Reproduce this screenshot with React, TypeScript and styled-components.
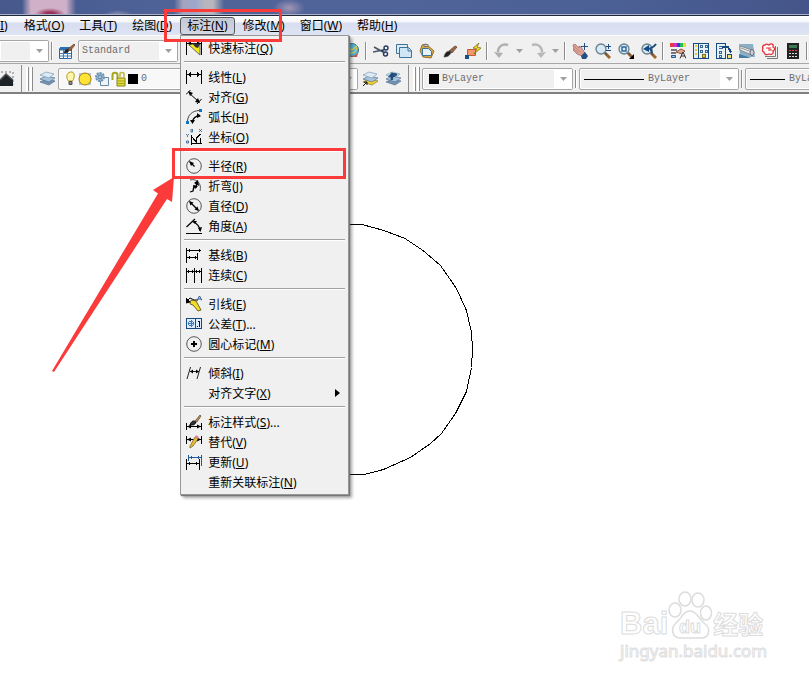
import React from "react";
import styled, { createGlobalStyle } from "styled-components";

const GlobalStyle = createGlobalStyle`
  * { box-sizing: border-box; }
  html, body, #root { height: 100%; }
  body {
    margin: 0;
    overflow: hidden;
    background: #fff;
    color: #000;
    font: 12px/18px "Noto Sans", "Noto Sans CJK SC", sans-serif;
  }
  button, select { font: inherit; color: inherit; }
`;

const Window = styled.div`
  position: relative;
  display: flex;
  flex-direction: column;
  min-height: 100vh;
`;

const TitleStrip = styled.header`
  height: 16px;
  flex: none;
  border-bottom: 1px solid #20283c;
  box-shadow: inset 0 -1px #a9b2c8;
  background:
    radial-gradient(ellipse 15px 6px at 50px 14px, #983058 0 30%, transparent 100%),
    linear-gradient(90deg, transparent 22px, #cfb0c8 31px 66px, transparent 76px),
    radial-gradient(ellipse 14px 5px at 118px 15px, #8c93b4, transparent),
    linear-gradient(90deg, transparent 174px, #a5a3bd 183px, #9ba8cb 195px, #b9b7bd 206px 213px, transparent 224px),
    radial-gradient(ellipse 16px 9px at 289px 8px, #a296b4, transparent),
    linear-gradient(90deg, #46588c, #4f6398 20%, #50649a 50%, #4b6095 75%, #45558a);
`;

const MenuBar = styled.nav`
  display: flex;
  flex: none;
  gap: 1px;
  height: 19px;
  padding-top: 1px;
  background: linear-gradient(#fff 0, #f4f6fb 6px, #d7deef 7px, #dfe4f3 100%);
`;

const MenuSlot = styled.div`
  position: relative;
`;

const MenuTitle = styled.button<{ $open?: boolean; $cut?: boolean }>`
  height: 18px;
  padding: ${(p) => (p.$cut ? "0 7px 0 0" : "0 6px")};
  border: 1px solid ${(p) => (p.$open ? "#55585f" : "transparent")};
  border-left-width: ${(p) => (p.$cut ? "0" : "1px")};
  border-radius: 3px;
  background: ${(p) => (p.$open ? "linear-gradient(#c3c8d3, #d3d8e4)" : "none")};
  line-height: 16px;
  white-space: nowrap;
`;

const Popup = styled.div`
  position: absolute;
  z-index: 2;
  top: 18px;
  left: 0;
  width: 169px;
  padding: 2px 0;
  border: 1px solid #979797;
  background: #f0f0f0;
  box-shadow: 1px 1px 1px #777, 3px 3px 3px rgba(0, 0, 0, 0.35);
`;

const PopupItem = styled.button`
  display: flex;
  align-items: center;
  width: 100%;
  height: 20px;
  padding: 0 8px 0 5px;
  gap: 6px;
  border: 0;
  background: none;
  line-height: 18px;
  text-align: left;
  white-space: nowrap;
`;

const ItemLabel = styled.span`
  flex: 1;
  padding-top: 2px;
`;

const PopupRule = styled.hr`
  height: 2px;
  margin: 3px 3px 4px;
  border: 0;
  border-top: 1px solid #a0a0a0;
  border-bottom: 1px solid #fff;
`;

const Toolbar = styled.div<{ $last?: boolean }>`
  display: flex;
  flex: none;
  align-items: center;
  height: ${(p) => (p.$last ? "31px" : "28px")};
  padding-top: ${(p) => (p.$last ? "2px" : "3px")};
  overflow: hidden;
  background: #f0f0f0;
  border-top: 1px solid ${(p) => (p.$last ? "#a8a8a8" : "#fbfbfb")};
  border-bottom: ${(p) => (p.$last ? "2px solid #808080" : "0")};
`;

const ToolButton = styled.button<{ $w?: number }>`
  display: flex;
  flex: none;
  align-items: center;
  justify-content: center;
  width: ${(p) => p.$w ?? 23}px;
  height: 22px;
  padding: 0;
  border: 0;
  background: none;
`;

const Divider = styled.span`
  flex: none;
  width: 6px;
  height: 18px;
  background: linear-gradient(90deg, transparent 2px, #8c8c8c 2px 3px, #fff 3px 4px, transparent 4px);
`;

const BandEdge = styled.span<{ $before: number }>`
  flex: none;
  width: 5px;
  height: 28px;
  margin-left: ${(p) => p.$before}px;
  border-left: 1px solid #8c8c8c;
`;

const Grip = styled.span`
  flex: none;
  width: 7px;
  height: 24px;
  margin-right: 2px;
  background: linear-gradient(90deg, #fff 0 2px, #8c8c8c 2px 3px, transparent 3px 4px, #fff 4px 6px, #8c8c8c 6px);
`;

const HiddenRun = styled.span`
  flex: none;
  width: 162px;
`;

const ComboFrame = styled.label<{ $w: number; $pad: number; $light?: boolean; $cut?: boolean }>`
  display: flex;
  flex: none;
  align-items: center;
  gap: 1px;
  width: ${(p) => p.$w}px;
  height: 22px;
  padding-left: ${(p) => p.$pad}px;
  border: 1px solid #a5a5a5;
  border-left-width: ${(p) => (p.$cut ? "0" : "1px")};
  border-radius: ${(p) => (p.$cut ? "0 2px 2px 0" : "2px")};
  box-shadow: inset 0 0 0 1px #fff;
  background: ${(p) => (p.$light ? "#f8f8f8" : "#f0f0f0")};
`;

const ComboSelect = styled.select`
  appearance: none;
  flex: 1;
  min-width: 0;
  padding: 0;
  border: 0;
  background: none;
  color: #6d6d6d;
  font: 10px/18px "Liberation Mono", monospace;
`;

const ComboArrow = styled.span`
  display: grid;
  place-items: center;
  flex: none;
  width: 18px;
  height: 20px;
  background: #fff;
`;

const Swatch = styled.span`
  flex: none;
  width: 10px;
  height: 10px;
  margin-right: 2px;
  background: #000;
`;

const LineSample = styled.span<{ $w: number }>`
  flex: none;
  width: ${(p) => p.$w}px;
  height: 1px;
  margin-right: 3px;
  background: #000;
`;

const Canvas = styled.main`
  position: relative;
  flex: 1;
  background: #fff;
`;

const Drawing = styled.svg`
  position: absolute;
  top: 0;
  left: 0;
`;

const Highlight = styled.div<{ $x: number; $y: number; $w: number; $h: number }>`
  position: absolute;
  z-index: 3;
  pointer-events: none;
  left: ${(p) => p.$x}px;
  top: ${(p) => p.$y}px;
  width: ${(p) => p.$w}px;
  height: ${(p) => p.$h}px;
  border: 3px solid #fb3a3a;
`;

const Watermark = styled.div`
  position: absolute;
  right: 44px;
  bottom: 16px;
  width: 145px;
  white-space: nowrap;
`;

const Brand = styled.div`
  display: flex;
  align-items: flex-end;
  height: 46px;
  color: #fff;
  font: bold 31px/31px "Liberation Sans", sans-serif;
  -webkit-text-stroke: 1px #dcdcdc;
`;

const BrandCn = styled.span`
  font: bold 25px/32px "Noto Sans CJK SC", sans-serif;
`;

const Site = styled.div`
  color: #fff;
  font: 17px/24px "Noto Sans", sans-serif;
  -webkit-text-stroke: 1px #e0e0e0;
`;

type Draw = { children: React.ReactNode; crisp?: boolean };

const Icon = ({ children, crisp }: Draw) => (
  <svg width="16" height="16" viewBox="0 0 16 16" fill="none" stroke="#000" aria-hidden="true"
    shapeRendering={crisp ? "crispEdges" : "auto"}>
    {children}
  </svg>
);

const Chevron = () => (
  <svg width="7" height="4" viewBox="0 0 7 4" aria-hidden="true"><path d="M0 0h7L3.500 4z" fill="#a0a0a0" /></svg>
);

const menuIcons: Record<string, React.ReactNode> = {
  quick: <Icon><path d="M.5 1v14M15.500 1v14M1 3.500h14" /><path d="M1 3.500l4-2v4zM15 3.500l-4-2v4z" fill="#000" stroke="none" /><path d="M3 5l11 10V4l-4 3-3-3z" fill="#f4e81c" stroke="#444" strokeWidth=".8" /><path d="M7 3l7 1-2 4-3-1z" fill="#333" stroke="none" /></Icon>,
  linear: <Icon crisp><path d="M.5 1v14M15.500 1v14M1 5.500h14M3.500 4v3M12.500 4v3M2.500 5v1M4.500 3v5M11.500 3v5" /></Icon>,
  aligned: <Icon><path d="M0 5.500L4.500 1M11 15l4.500-5M3 4l9.500 8.500" /><path d="M2 2l5 2-3 3zM14 14l-5-1 3-4z" fill="#000" stroke="none" /></Icon>,
  arc: <Icon><path d="M1.500 12C2 6 6 2 13 1.500" stroke="#444" /><path d="M6.500 13C7 9 9 7 14 6.500" strokeWidth="1.300" /><path d="M4 11h5l-2.500 4zM11 4v5l4-2z" fill="#000" stroke="none" /><path d="M0 12h3v3H0zM13 0h3v3h-3z" fill="#1672b8" stroke="none" /></Icon>,
  ordinate: <Icon><path d="M5.500 6v9.500M5 14.500h11M6 8l5 6M10.500 14V9l4-4M14 14V9" shapeRendering="crispEdges" /><path d="M5 0h1.500v3H5zM13 0l3 3M16 0l-3 3M0 5l1.500 1.500L3 5M1.500 6.500V8M.5 12h2v2h-2z" stroke="#35689a" strokeWidth=".9" /></Icon>,
  radius: <Icon><circle cx="8" cy="8" r="7.300" stroke="#555" /><path d="M8.500 8.500L4 4" strokeWidth="1.200" /><path d="M3 3l5 2-3 3z" fill="#000" stroke="none" /></Icon>,
  jogged: <Icon><path d="M4 2c7-2 12 4 10 11" stroke="#555" /><path d="M4 14l3-1 1-5 2 1 1-5" strokeWidth="1.300" /><path d="M12 2l1 6-5-3zM7 7l5 1-3 3z" fill="#000" stroke="none" /></Icon>,
  diameter: <Icon><circle cx="8" cy="8" r="7.300" stroke="#555" /><path d="M4 4l8 8" strokeWidth="1.200" /><path d="M3 3l4.500 1.500-3 3zM13 13l-4.500-1.500 3-3z" fill="#000" stroke="none" /></Icon>,
  angular: <Icon><path d="M0 15.500h16" shapeRendering="crispEdges" strokeWidth="1" /><path d="M.5 9L9 1M7 4c4 1 7 5 7 9" strokeWidth="1.200" /><path d="M7 3l4 0-2 3zM12 10l4-1-1.500 5z" fill="#000" stroke="none" /></Icon>,
  baseline: <Icon crisp><path d="M.5 1v15M11.500 6v7M1 3.500h14M1 10.500h10M3.500 2v3M13.500 2v3M3.500 9v3M9.500 9v3" /></Icon>,
  cont: <Icon crisp><path d="M.5 1v15M8.500 1v15M15.500 1v15M1 4.500h14M2.500 3v3M6.500 3v3M10.500 3v3M13.500 3v3" /></Icon>,
  leader: <Icon><path d="M1 5l3-3 4 2h4" /><path d="M0 7V2l4 4z" fill="#000" /><path d="M5 4l5 1 5 9-3 1-5-6-3-1z" fill="#f1dc28" stroke="#4e4510" strokeWidth=".8" /><path d="M11 4.500L13.500 0 16 4.500M12 3h3" stroke="#29588f" /></Icon>,
  tolerance: <Icon crisp><path d="M.5 2.500h15v10H.5z" fill="#dfeeff" stroke="#174a80" /><path d="M9.500 3v9" stroke="#174a80" /><circle cx="5" cy="7.500" r="2.500" stroke="#3b7cb8" /><path d="M5.500 4v7M2 7.500h6" stroke="#3b7cb8" /><path d="M13.500 5v6M12 5.500h1M11 10.500h1" stroke="#111" /></Icon>,
  center: <Icon><circle cx="8" cy="8" r="7.300" stroke="#555" /><path d="M8 5v6M5 8h6" strokeWidth="2" shapeRendering="crispEdges" /></Icon>,
  oblique: <Icon><path d="M1 14L4.500 2M11 14l3.500-12M4 6.500h9" stroke="#222" /><path d="M4 6.500l3-2v4zM13 6.500l-3-2v4z" fill="#000" stroke="none" /></Icon>,
  style: <Icon><path d="M.5 9v7M15.500 9v7M1 12.500h14" /><path d="M1 12.500l4-2v4zM15 12.500l-4-2v4z" fill="#000" stroke="none" /><path d="M4 11c1-4 4-5 6-3-1 3-3 3-6 3z" fill="#333" /><path d="M9 7l5-6 1 1-4 6z" fill="#c28950" stroke="#5b4635" strokeWidth=".7" /></Icon>,
  override: <Icon><path d="M.5 2v8M15.500 2v8M1 5.500h14" /><path d="M1 5.500l4-2v4zM15 5.500l-4-2v4z" fill="#000" stroke="none" /><path d="M4 12L9 3l3 2-5 7-3 2z" fill="#e9bd32" stroke="#6a5520" strokeWidth=".7" /><path d="M9 3l1-2 3 2-1 2z" fill="#e0849a" stroke="none" /></Icon>,
  update: <Icon crisp><path d="M2.500 1v6M15.500 1v11M3 3.500h12M5.500 2v3M12.500 2v3" stroke="#1f5b96" /><path d="M.5 5v11M13.500 5v11M1 9.500h12M3.500 8v3M10.500 8v3" /></Icon>,
  none: <Icon>{null}</Icon>,
};

const menu: [string, string, string, string?][][] = [
  [["quick", "快速标注", "Q"]],
  [["linear", "线性", "L"], ["aligned", "对齐", "G"], ["arc", "弧长", "H"], ["ordinate", "坐标", "O"]],
  [["radius", "半径", "R"], ["jogged", "折弯", "J"], ["diameter", "直径", "D"], ["angular", "角度", "A"]],
  [["baseline", "基线", "B"], ["cont", "连续", "C"]],
  [["leader", "引线", "E"], ["tolerance", "公差", "T", "..."], ["center", "圆心标记", "M"]],
  [["oblique", "倾斜", "I"], ["none", "对齐文字", "X", ">"]],
  [["style", "标注样式", "S", "..."], ["override", "替代", "V"], ["update", "更新", "U"], ["none", "重新关联标注", "N"]],
];

const DimensionMenu = () => (
  <Popup role="menu" aria-label="标注">
    {menu.map((group, i) => (
      <React.Fragment key={i}>
        {i > 0 && <PopupRule />}
        {group.map(([icon, text, key, tail]) => (
          <PopupItem key={text} role="menuitem">
            {menuIcons[icon]}
            <ItemLabel>{text}(<u>{key}</u>){tail === "..." && tail}</ItemLabel>
            {tail === ">" && (
              <svg width="5" height="8" viewBox="0 0 5 8" aria-hidden="true"><path d="M0 0l5 4-5 4z" /></svg>
            )}
          </PopupItem>
        ))}
      </React.Fragment>
    ))}
  </Popup>
);

const Combo = ({ w, pad = 3, label, value, light, cut, children }: {
  w: number; pad?: number; label: string; value: string; light?: boolean; cut?: boolean; children?: React.ReactNode;
}) => (
  <ComboFrame $w={w} $pad={pad} $light={light} $cut={cut}>
    {children}
    <ComboSelect aria-label={label}><option>{value}</option></ComboSelect>
    <ComboArrow><Chevron /></ComboArrow>
  </ComboFrame>
);

const Lens = () => (
  <>
    <path d="M10 10l5 5" stroke="#9b652d" strokeWidth="3" />
    <path d="M9 9l3 3" stroke="#555" strokeWidth="1.500" />
    <circle cx="6" cy="6" r="5" fill="#d7eaf4" stroke="#687f8c" strokeWidth="1.300" />
  </>
);

const Layers = ({ yellow }: { yellow?: boolean }) => (
  <>
    <path d="M1 11l6-3 9 2-6 4z" fill={yellow ? "#f1d42c" : "#7293b4"} stroke={yellow ? "#887417" : "#567490"} strokeWidth=".7" />
    <path d="M1 8l6-3 9 2-6 4z" fill="#a7c4dc" stroke="#567490" strokeWidth=".7" />
    <path d="M1 4l6-3 8 2-5 4z" fill="#dcebf5" stroke="#7e99b0" strokeWidth=".7" />
  </>
);

const toolIcons: Record<string, React.ReactNode> = {
  tableStyle: <Icon><path d="M.5 5.500h12v10H.5z" fill="#fff" stroke="#2a68a8" /><path d="M1 7h11M1 10.500h11M1 13h11M4.500 6v9M8.500 6v9" stroke="#3d7dbb" /><path d="M1 4h11v3H1z" fill="#2f6fb3" stroke="none" /><path d="M5 10c0-3 2-4 4-4l1 2c-1 2-3 2-5 2z" fill="#222" stroke="none" /><path d="M9 6l6-5 1 1-5 6z" fill="#a86535" stroke="#4b2e1c" strokeWidth=".6" /></Icon>,
  globe: <Icon><circle cx="8" cy="7" r="6.500" fill="#55b4d8" stroke="#41708e" /><path d="M3 4l5 3 5-4M4 11l7-2 2-4" stroke="#e4cf42" strokeWidth="1.200" /><path d="M8 14l6-4-1 4z" fill="#c54" stroke="none" /></Icon>,
  cut: <Icon><path d="M1 4l9 5M0 9l10-2" stroke="#465464" strokeWidth="1.500" /><circle cx="13" cy="5" r="2" stroke="#25385e" strokeWidth="1.400" /><circle cx="12.500" cy="11" r="2" stroke="#25385e" strokeWidth="1.400" /><path d="M9 8l3-2M9 8l3 2" stroke="#25385e" strokeWidth="1.500" /></Icon>,
  copy: <Icon><path d="M.5 1.500h11v9H.5z" fill="#dcecf5" stroke="#3e7399" /><path d="M3.500 4.500h9l3 3v7h-12z" fill="#cfe6f4" stroke="#3e7399" /><path d="M12 5v3h3" stroke="#3e7399" /></Icon>,
  paste: <Icon><path d="M3 2l4-1 8 7-3 7-8-1-3-6z" fill="#dca83c" stroke="#967032" /><path d="M5 1.500h4v2H5z" fill="#ccc" stroke="#777" /><path d="M3.500 5.500h6l3 3v4h-9z" fill="#e4f2fb" stroke="#3e7399" /></Icon>,
  match: <Icon><path d="M7 8l6-5 2 1-5 6z" fill="#9c6844" stroke="#553622" strokeWidth=".7" /><path d="M2 14c1-5 4-7 7-5-1 4-4 5-7 5z" fill="#222" stroke="#444" strokeWidth=".6" /></Icon>,
  edit: <Icon><path d="M2.500 6.500h8v6h-8z" fill="#f1996c" stroke="#c05e33" /><path d="M0 12h4v4H0z" fill="#174f88" stroke="none" /><path d="M14 0L8 5l4 1-3 5 7-6-4-1z" fill="#f6da22" stroke="#765f0e" strokeWidth=".7" /></Icon>,
  undo: <Icon><path d="M14 2C8 0 4 4 4 9" stroke="#b0b0b0" strokeWidth="2.500" /><path d="M0 9l9 1-4 5z" fill="#b0b0b0" stroke="none" /></Icon>,
  redo: <Icon><path d="M2 2c6-2 10 2 10 7" stroke="#b8b8b8" strokeWidth="2.500" /><path d="M16 9l-9 1 4 5z" fill="#b8b8b8" stroke="none" /></Icon>,
  pan: <Icon><path d="M1 2l2-1 4 4V3l2 1 4 6-3 3-5-2-4-4 1-1z" fill="#dba397" stroke="#9d665b" strokeWidth=".7" /><path d="M9 13l4-4 3 4-2 3h-4z" fill="#244f83" stroke="none" /><path d="M12.500 0v7M9 3.500h7" stroke="#244f83" /><path d="M2 3l6 6M1 5l5 5" stroke="#b67c70" strokeWidth=".7" /></Icon>,
  zoomRt: <Icon><Lens /><path d="M13.500 1v5M11 3.500h5M11 7.500h5" stroke="#174a80" /></Icon>,
  zoomWin: <Icon><Lens /><path d="M4 4h4v4H4z" stroke="#2c659c" strokeWidth="1.400" /><path d="M16 11v5h-5z" fill="#000" stroke="none" /></Icon>,
  zoomPrev: <Icon><Lens /><path d="M5 6c4 0 7-1 10-5M9 6c2 1 2 2 2 4" stroke="#174a80" strokeWidth="2" /><path d="M2 6l6-4v7z" fill="#174a80" stroke="none" /></Icon>,
  props: <Icon><path d="M0 0h4v4H0z" fill="#e23b3b" stroke="none" /><path d="M4 0h3v4H4z" fill="#d32bc4" stroke="none" /><path d="M7 0h3v4H7z" fill="#303bd8" stroke="none" /><path d="M10 0h3v4h-3z" fill="#20bd58" stroke="none" /><path d="M13 0h3v4h-3z" fill="#e9db30" stroke="none" /><path d="M1 7h6M1 10h5" stroke="#777" strokeWidth="2" /><path d="M1.500 12.500h4v2h-4z" fill="#8fc7ec" stroke="#245888" /><path d="M6 9l5-3 4 2-3 3z" fill="#e1a687" stroke="#8a5948" /><path d="M10 15.500L13 9l3 6.500M11 13h4" stroke="#333" /></Icon>,
  center: <Icon crisp><path d="M.5.500h15v15H.5z" fill="#e5f1f8" stroke="#174a80" /><path d="M5.500 1v15" stroke="#174a80" /><path d="M2 2h2v2H2zM2 6h2v2H2zM2 10h2v2H2z" fill="#e5c52b" stroke="none" /><path d="M7.500 2.500h2v2h-2zM12.500 2.500h2v2h-2zM7.500 7.500h2v2h-2zM12.500 7.500h2v2h-2z" stroke="#3b678e" /><path d="M9 11h3v3H9z" fill="#e5c52b" stroke="#806c19" /></Icon>,
  palette: <Icon crisp><path d="M.5.500h9v15h-9z" fill="#e5f1f8" stroke="#174a80" /><path d="M3 3h4M3 5h4M3 8h2v2H3zM3 12h2v2H3z" stroke="#3b678e" /><path d="M6 4h6l3 5" stroke="#174a80" strokeWidth="2" /><path d="M11 11h4v4h-4z" fill="#f2e278" stroke="#174a80" /><path d="M12 8h4l-1 3z" fill="#174a80" stroke="none" /></Icon>,
  sheet: <Icon><path d="M0 1h14l2 13H1z" fill="#8aafc7" stroke="none" /><path d="M1 3l12 4v5L1 7z" fill="#e9eeee" stroke="#777" strokeWidth=".7" /><path d="M2 5l11 4" stroke="#999" /><ellipse cx="13" cy="9.500" rx="2" ry="3" fill="#c8d0d2" stroke="#667" /><path d="M0 11l12 4H0z" fill="#447ba0" stroke="none" /></Icon>,
  markup: <Icon><path d="M5 15.500h10.500V4M3 13.500h10.500V3" stroke="#777" /><path d="M3 2c2-2 3 0 4 0 2-2 5-1 4 2 3 1 1 4 0 4 1 3-2 4-4 3-2 1-5 1-5-2-3-1-1-3-1-4-1-1 0-3 2-3z" fill="#fff" stroke="#e52d32" strokeWidth="1.300" /><path d="M4 5h3v3M8 4v3h2" stroke="#e52d32" /></Icon>,
  calc: <Icon crisp><path d="M2 0h12v16H2z" fill="#222" stroke="none" /><path d="M4 2h8v3H4z" fill="#3d7a54" stroke="none" /><path d="M4 7h2v1H4zM7 7h2v1H7zM10 7h2v1h-2z" fill="#e34848" stroke="none" /><path d="M4 10h2v1H4zM7 10h2v1H7zM10 10h2v1h-2zM4 13h2v1H4zM7 13h2v1H7zM10 13h2v1h-2z" fill="#ddd" stroke="none" /></Icon>,
  home: <Icon><path d="M1 1h12v13" stroke="#777" strokeDasharray="2 2" /><path d="M0 9l6-6 7 6v6H0z" fill="#1c2226" stroke="none" /><path d="M0 9l6-6 7 6" stroke="#555" strokeWidth="1.500" /></Icon>,
  layers: <Icon><Layers /></Icon>,
  layerCur: <Icon><Layers yellow /><path d="M1 15l4-4M2 11h3v3" stroke="#111" /></Icon>,
  layerPrev: <Icon><Layers /><path d="M7 9C6 4 8 2 12 4" stroke="#1f4e7b" strokeWidth="2.500" /><path d="M3 6l4-5 4 5z" fill="#1f4e7b" stroke="none" /></Icon>,
  bulb: <svg width="11" height="16" viewBox="0 0 11 16" aria-hidden="true"><path d="M3.500 10C1 7 1 2 5.500 1S10 7 7.500 10z" fill="#fff7a8" stroke="#b69523" /><path d="M4 10.500h3v3H4z" fill="#888" stroke="#555" /></svg>,
  sun: <Icon><path d="M2 2h12v12H2z" fill="#b1c8d6" stroke="none" /><circle cx="8" cy="8" r="6" fill="#ffe436" stroke="#b07c10" /></Icon>,
  freeze: <Icon><path d="M6.500 6.500h8v8h-8z" fill="#eef5fa" stroke="#688aa5" /><circle cx="6" cy="6" r="4" fill="#a8c3da" stroke="#6a8eae" strokeWidth="2" strokeDasharray="2 1" /><circle cx="6" cy="6" r="2" stroke="#577c9e" /></Icon>,
  lock: <Icon><path d="M1.500 9V4c0-3 5-3 5 0v3" stroke="#a7a41c" strokeWidth="2" /><path d="M6 7h8v8H6z" fill="#e4dc39" stroke="#85801a" /><path d="M6 10h8M6 12.500h8" stroke="#a7a41c" /><path d="M9 6V3c0-2 4-2 4 0v3" stroke="#bbb748" strokeWidth="1.500" /></Icon>,
};

const Tools = ({ names }: { names: string[] }) => (
  <>{names.map((n) => <ToolButton key={n} aria-label={n}>{toolIcons[n]}</ToolButton>)}</>
);

const Baidu = () => (
  <Watermark>
    <Brand>
      <span>Bai</span>
      <svg width="45" height="48" viewBox="0 0 45 48" fill="#fff" stroke="#dcdcdc" strokeWidth="1.500" aria-hidden="true">
        <ellipse cx="7" cy="19" rx="6" ry="7" /><ellipse cx="17" cy="8" rx="6" ry="7" />
        <ellipse cx="30" cy="9" rx="6" ry="7" /><ellipse cx="38" cy="22" rx="5.500" ry="7" />
        <path d="M22 20c7 0 9 8 14 12 8 6 5 15-3 15H13C4 47 2 38 8 32c6-5 7-12 14-12z" />
        <text x="11" y="42" fontSize="18" fontWeight="bold" fontFamily="Liberation Sans" strokeWidth="1">du</text>
      </svg>
      <BrandCn>经验</BrandCn>
    </Brand>
    <Site>jingyan.baidu.com</Site>
  </Watermark>
);

const titles: [string, string][] = [["格式", "O"], ["工具", "T"], ["绘图", "D"], ["标注", "N"], ["修改", "M"], ["窗口", "W"], ["帮助", "H"]];

export default function App() {
  return (
    <>
      <GlobalStyle />
      <Window>
        <TitleStrip />
        <MenuBar>
          <MenuTitle $cut><u>I</u>)</MenuTitle>
          {titles.map(([text, key]) => (
            <MenuSlot key={key}>
              <MenuTitle $open={key === "N"}>{text}(<u>{key}</u>)</MenuTitle>
              {key === "N" && <DimensionMenu />}
            </MenuSlot>
          ))}
        </MenuBar>
        <Toolbar>
          <Combo w={49} label="文字样式" value="" cut />
          <Divider />
          <Tools names={["tableStyle"]} />
          <Combo w={100} label="表格样式" value="Standard" />
          <HiddenRun />
          <Tools names={["globe"]} />
          <Divider />
          <Tools names={["cut", "copy", "paste", "match", "edit"]} />
          <Divider />
          <Tools names={["undo"]} />
          <ToolButton $w={13} aria-label="undo list"><Chevron /></ToolButton>
          <Tools names={["redo"]} />
          <ToolButton $w={13} aria-label="redo list"><Chevron /></ToolButton>
          <Divider />
          <Tools names={["pan", "zoomRt", "zoomWin", "zoomPrev"]} />
          <Divider />
          <Tools names={["props", "center", "palette", "sheet", "markup", "calc"]} />
          <Divider />
        </Toolbar>
        <Toolbar $last>
          <ToolButton $w={16} aria-label="home">{toolIcons.home}</ToolButton>
          <BandEdge $before={5} />
          <Grip />
          <Tools names={["layers"]} />
          <Combo w={300} pad={6} label="图层" value="0" light>
            {toolIcons.bulb}{toolIcons.sun}{toolIcons.freeze}{toolIcons.lock}<Swatch />
          </Combo>
          <Tools names={["layerCur", "layerPrev"]} />
          <BandEdge $before={4} />
          <Grip />
          <Combo w={151} pad={6} label="颜色" value="ByLayer"><Swatch /></Combo>
          <Divider />
          <Combo w={160} pad={4} label="线型" value="ByLayer"><LineSample $w={60} /></Combo>
          <Divider />
          <Combo w={160} pad={4} label="线宽" value="ByLayer"><LineSample $w={35} /></Combo>
        </Toolbar>
        <Canvas>
          <Drawing width="480" height="400" viewBox="0 94 480 400" aria-hidden="true">
            <path
              d="M340 224.500H362L384 230.500L405 238.500L423 250.500L440.500 265.500L456.500 288.500L466.500 310.500L471.500 332.500L472.500 349.500L471.500 367.500L466.500 391.500L455.500 413.500L441.500 433.500L430.500 443.500L410.500 457.500L383.500 469.500L364 474.500H340"
              fill="none" stroke="#000" shapeRendering="crispEdges"
            />
            <path d="M174 177L153 190L158 193.500L52 371L54 372L167 199L172 202Z" fill="#fb3a3a" />
          </Drawing>
          <Baidu />
        </Canvas>
        <Highlight $x={164} $y={9} $w={118} $h={33} />
        <Highlight $x={172} $y={148} $w={174} $h={31} />
      </Window>
    </>
  );
}
